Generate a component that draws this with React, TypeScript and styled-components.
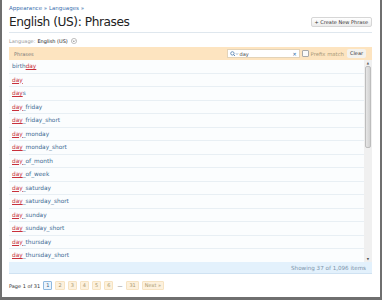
import { createGlobalStyle } from 'styled-components';
import styled from 'styled-components';

const phrases = [
  'birthday',
  'day',
  'days',
  'day_friday',
  'day_friday_short',
  'day_monday',
  'day_monday_short',
  'day_of_month',
  'day_of_week',
  'day_saturday',
  'day_saturday_short',
  'day_sunday',
  'day_sunday_short',
  'day_thursday',
  'day_thursday_short',
];

const query = 'day';

const highlight = (text: string) => {
  const i = text.indexOf(query);
  if (i < 0) return text;
  return (
    <>
      {text.slice(0, i)}
      <Match>{query}</Match>
      {text.slice(i + query.length)}
    </>
  );
};

const App = () => {
  return (
    <>
      <GlobalStyle />
      <Frame>
        <Breadcrumb>
          <a>Appearance</a> » <a>Languages</a> »
        </Breadcrumb>
        <Header>
          <Title>English (US): Phrases</Title>
          <CreateButton>+ Create New Phrase</CreateButton>
        </Header>
        <LanguageLine>
          <span className='label'>Language:</span>
          <span className='value'>English (US)</span>
          <Chevron>
            <svg width='6' height='6' viewBox='0 0 6 6'>
              <circle cx='3' cy='3' r='2.6' fill='#fff' stroke='#999' strokeWidth='0.6' />
              <path d='M1.8 2.5 L3 3.7 L4.2 2.5' fill='none' stroke='#666' strokeWidth='0.7' />
            </svg>
          </Chevron>
        </LanguageLine>

        <Panel>
          <PanelHead>
            <span className='title'>Phrases</span>
            <Filters>
              <SearchBox>
                <svg width='9' height='6' viewBox='0 0 9 6'>
                  <circle cx='2.4' cy='2.4' r='1.7' fill='none' stroke='#3a6fa6' strokeWidth='0.7' />
                  <path d='M3.6 3.6 L5 5' stroke='#3a6fa6' strokeWidth='0.8' />
                  <path d='M6 2.4 L7 3.4 L8 2.4' fill='none' stroke='#3a6fa6' strokeWidth='0.6' />
                </svg>
                <span className='text'>day</span>
                <span className='clear'>✕</span>
              </SearchBox>
              <Check />
              <span className='prefix'>Prefix match</span>
              <SmallButton>Clear</SmallButton>
            </Filters>
          </PanelHead>
          <ListArea>
            <Rows>
              {phrases.map((p) => (
                <Row key={p}>{highlight(p)}</Row>
              ))}
            </Rows>
            <Scrollbar>
              <span className='arrow'>▲</span>
              <div className='track'>
                <div className='thumb' />
              </div>
              <span className='arrow'>▼</span>
            </Scrollbar>
          </ListArea>
          <PanelFoot>Showing 37 of 1,096 items</PanelFoot>
        </Panel>

        <Pager>
          <span className='info'>Page 1 of 31</span>
          <PageLink active>1</PageLink>
          <PageLink>2</PageLink>
          <PageLink>3</PageLink>
          <PageLink>4</PageLink>
          <PageLink>5</PageLink>
          <PageLink>6</PageLink>
          <Dash>—</Dash>
          <PageLink>31</PageLink>
          <PageLink>Next »</PageLink>
        </Pager>
      </Frame>
    </>
  );
};

const GlobalStyle = createGlobalStyle`
  * { box-sizing: border-box; }
  body {
    margin: 0;
    background: #ffffff;
    font-family: 'DejaVu Sans', Verdana, sans-serif;
  }
`;

const Frame = styled.div`
  width: 382px;
  height: 300px;
  border-left: 2px solid #6f6f6f;
  border-right: 2px solid #6f6f6f;
  border-bottom: 3px solid #6f6f6f;
  padding: 4px 8px 0 7px;
  overflow: hidden;
  background: #fff;
`;

const Breadcrumb = styled.div`
  font-size: 5.5px;
  color: #4a78b0;
  height: 8px;
  line-height: 9px;

  a {
    color: #3b6fae;
  }
`;

const Header = styled.div`
  display: flex;
  justify-content: space-between;
  align-items: center;
  height: 21px;
  border-bottom: 1px solid #dfe7ee;
  padding-bottom: 1px;
  margin-bottom: 2px;
`;

const Title = styled.h1`
  margin: 0;
  font-family: 'DejaVu Sans', Verdana, sans-serif;
  font-weight: 400;
  font-size: 12.2px;
  letter-spacing: -0.45px;
  color: #222;
`;

const CreateButton = styled.button`
  font-family: inherit;
  font-size: 5px;
  color: #333;
  height: 10px;
  padding: 0 3px;
  border: 1px solid #d6d6d6;
  border-radius: 2px;
  background: linear-gradient(#ffffff, #ececec);
  margin-top: 0;
`;

const LanguageLine = styled.div`
  display: flex;
  align-items: center;
  gap: 2px;
  font-size: 5px;
  height: 11px;

  .label {
    color: #999;
  }
  .value {
    color: #222;
  }
`;

const Chevron = styled.span`
  display: inline-flex;
  margin-left: 1px;
`;

const Panel = styled.div`
  margin-top: 1px;
`;

const PanelHead = styled.div`
  display: flex;
  justify-content: space-between;
  align-items: center;
  height: 13px;
  background: #fde4c0;
  padding: 0 6px 0 5px;

  .title {
    font-size: 5px;
    color: #777;
  }
`;

const Filters = styled.div`
  display: flex;
  align-items: center;
  gap: 2px;

  .prefix {
    font-size: 5.3px;
    color: #a99a7a;
    margin-right: 1px;
  }
`;

const SearchBox = styled.div`
  display: flex;
  align-items: center;
  width: 73px;
  height: 9px;
  background: #fff;
  border: 1px solid #e3d3b8;
  padding: 0 2px;
  font-size: 5px;

  .text {
    flex: 1;
    color: #444;
    margin-left: 1px;
  }
  .clear {
    color: #2b5fa0;
    font-weight: 700;
    font-size: 5px;
  }
`;

const Check = styled.span`
  width: 7px;
  height: 7px;
  border: 1px solid #a9a9a9;
  background: #fafafa;
  border-radius: 1px;
`;

const SmallButton = styled.span`
  font-size: 5px;
  color: #333;
  background: #f4f2ee;
  border-radius: 2px;
  padding: 1px 3px;
  height: 9px;
  line-height: 7px;
`;

const ListArea = styled.div`
  display: flex;
  height: 202px;
  background: #fbfdfe;
`;

const Rows = styled.div`
  flex: 1;
  overflow: hidden;
`;

const Row = styled.div`
  height: 13.5px;
  line-height: 13px;
  padding-left: 3px;
  font-size: 5.8px;
  color: #3d6a92;
  border-bottom: 1px solid #e8eff4;
`;

const Match = styled.span`
  color: #c8303b;
  text-decoration: underline;
`;

const Scrollbar = styled.div`
  width: 8px;
  display: flex;
  flex-direction: column;
  align-items: center;
  background: #f0f0f0;

  .arrow {
    font-size: 3px;
    color: #555;
    height: 6px;
    line-height: 6px;
  }
  .track {
    flex: 1;
    width: 100%;
    padding: 0 1px;
  }
  .thumb {
    height: 82px;
    background: linear-gradient(90deg, #e6e6e6, #d2d2d2);
    border: 1px solid #bdbdbd;
    border-radius: 2px;
  }
`;

const PanelFoot = styled.div`
  height: 12px;
  line-height: 12px;
  background: #e3f1fc;
  border-bottom: 1px solid #cfe2f2;
  text-align: right;
  padding-right: 6px;
  font-size: 5.6px;
  color: #7b93aa;
`;

const Pager = styled.div`
  display: flex;
  align-items: center;
  gap: 3px;
  margin-top: 7px;

  .info {
    font-size: 5px;
    color: #333;
    margin-right: 0;
  }
`;

const PageLink = styled.span<{ active?: boolean }>`
  font-size: 5px;
  height: 9px;
  line-height: 7px;
  padding: 0 2px;
  min-width: 8px;
  text-align: center;
  border: 1px solid ${(p) => (p.active ? '#8fb8de' : '#f6e3c2')};
  background: ${(p) => (p.active ? '#eaf4fd' : '#fdf1dd')};
  color: ${(p) => (p.active ? '#33577a' : '#a89870')};
  border-radius: 1px;
`;

const Dash = styled.span`
  font-size: 5px;
  color: #666;
  margin: 0 1px;
`;

export default App;
